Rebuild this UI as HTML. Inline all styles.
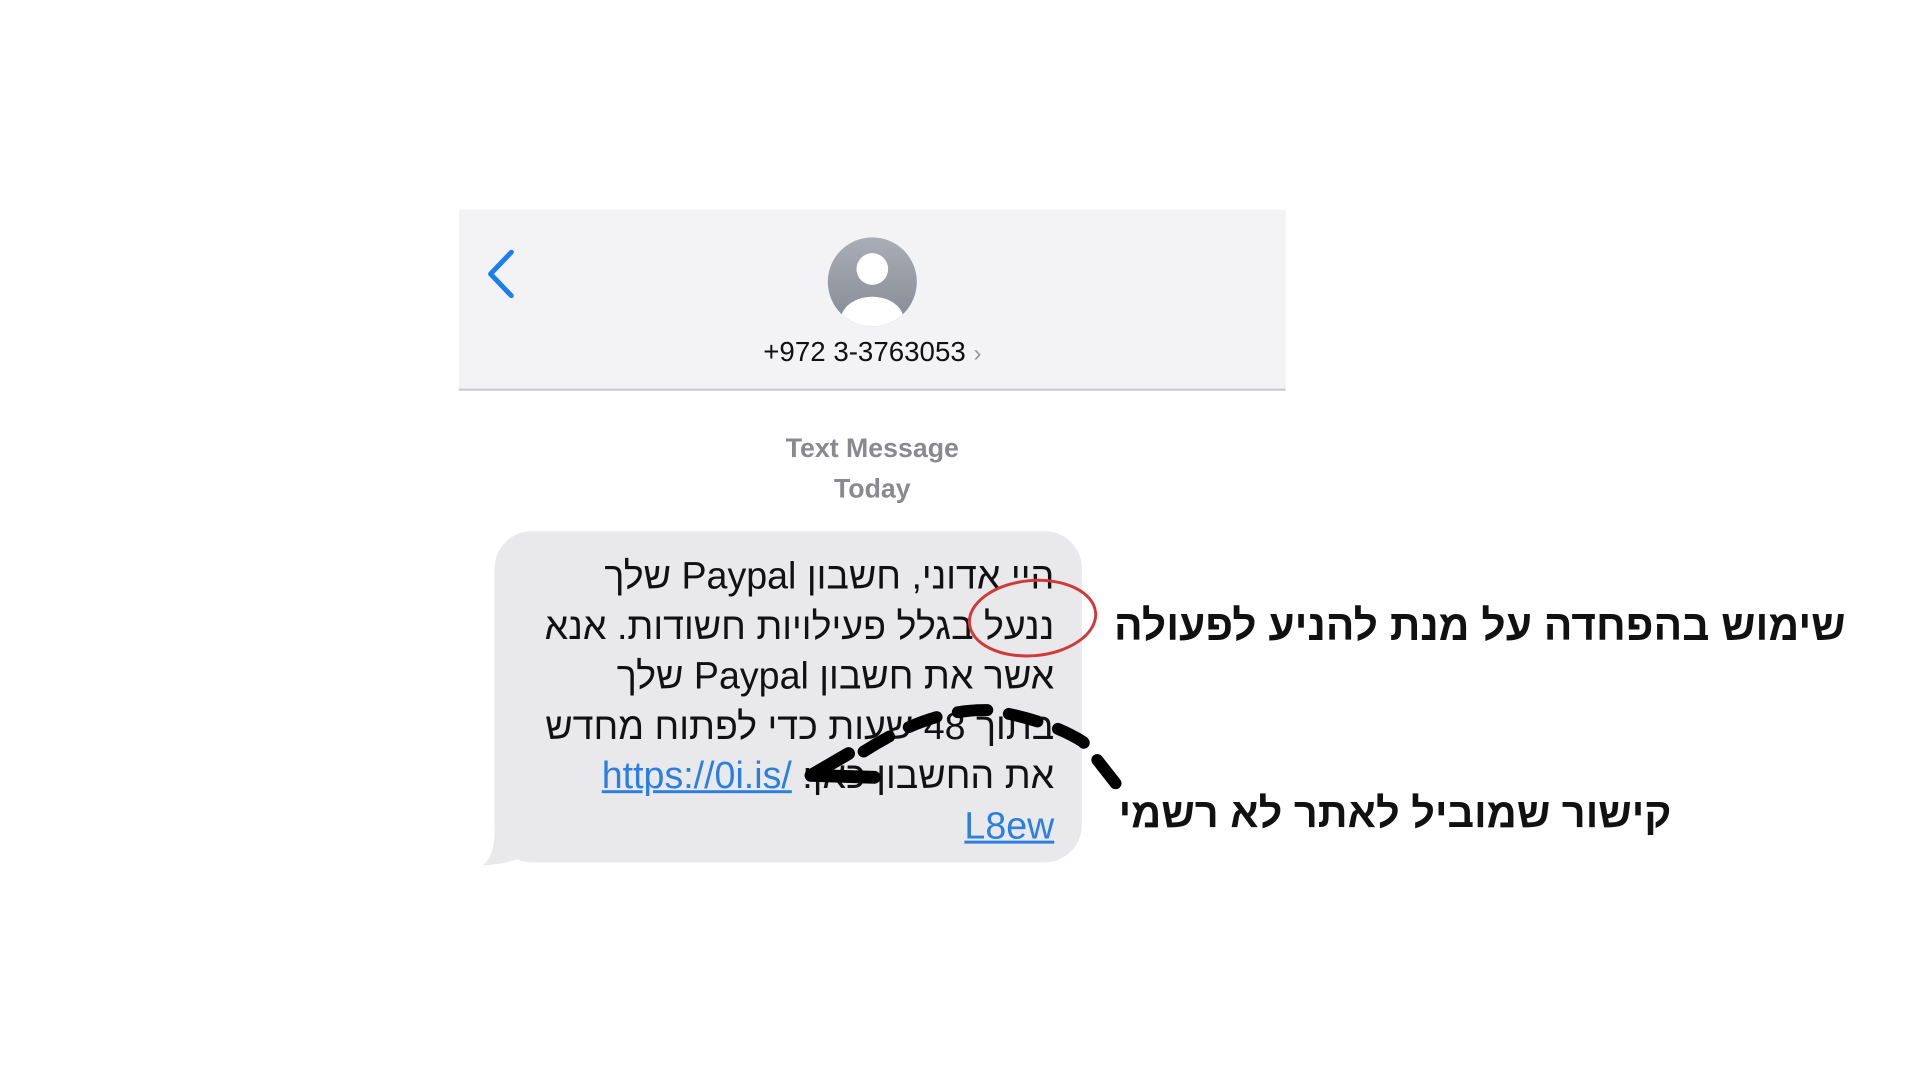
<!DOCTYPE html>
<html><head><meta charset="utf-8"><style>
body{margin:0;width:1920px;height:1080px;background:#fff;position:relative;overflow:hidden;font-family:"Liberation Sans","Noto Sans CJK SC",sans-serif}
#w{position:absolute;left:0;top:0;width:1920px;height:1080px;transform:scale(0.989);transform-origin:0 0}
.hdr{position:absolute;left:464px;top:212px;width:836px;height:181px;background:#f3f3f5;border-bottom:2px solid #c8c8cc}
.ph{position:absolute;left:464px;width:836px;top:340px;text-align:center;font-size:28px;color:#111}
.ph span{color:#999;font-size:24px}
.tm{position:absolute;left:464px;width:836px;text-align:center;font-size:27px;color:#8a8a8e;font-weight:bold}
.bub{position:absolute;left:500px;top:537px;width:594px;height:335px;background:#e9e9eb;border-radius:38px}
.txt{position:absolute;left:510px;width:556px;top:558px;direction:rtl;text-align:right;font-size:38px;line-height:50.5px;color:#111}
.txt a{color:#2b7fe0;text-decoration:underline;direction:ltr;unicode-bidi:isolate}
.ann{position:absolute;direction:rtl;font-weight:bold;font-size:43px;color:#111;white-space:nowrap}
</style></head><body><div id="w">
<div class="hdr"></div>
<svg style="position:absolute;left:0;top:0" width="1920" height="1080">
<polyline points="517,255 496,277 517,299" fill="none" stroke="#1a7ef0" stroke-width="5" stroke-linecap="round" stroke-linejoin="round"/>
<defs><linearGradient id="g" x1="0" y1="0" x2="0" y2="1"><stop offset="0" stop-color="#a9adb6"/><stop offset="1" stop-color="#868a94"/></linearGradient>
<clipPath id="c"><circle cx="882" cy="285" r="45"/></clipPath></defs>
<circle cx="882" cy="285" r="45" fill="url(#g)"/>
<g clip-path="url(#c)" fill="#fff"><circle cx="882" cy="272" r="16"/><ellipse cx="882" cy="324" rx="32" ry="24"/></g>
<path d="M500,840 Q500,866 488,875 Q512,874 530,866 Z" fill="#e9e9eb"/>
</svg>
<div class="ph">+972 3-3763053 <span>›</span></div>
<div class="tm" style="top:438px">Text Message</div>
<div class="tm" style="top:479px">Today</div>
<div class="bub"></div>
<div class="txt">היי אדוני, חשבון Paypal שלך<br>ננעל בגלל פעילויות חשודות. אנא<br>אשר את חשבון Paypal שלך<br>בתוך 48 שעות כדי לפתוח מחדש<br>את החשבון כאן: <a>https://0i.is/</a><br><a>L8ew</a></div>
<svg style="position:absolute;left:0;top:0" width="1920" height="1080">
<ellipse cx="1044" cy="625" rx="64" ry="38" fill="none" stroke="#d03a3a" stroke-width="3" transform="rotate(-5 1044 625)"/>
<path d="M1128,792 L1095,750 Q1060,728 1000,718 Q940,716 870,762" fill="none" stroke="#000" stroke-width="12" stroke-linecap="round" stroke-dasharray="30 22"/>
<path d="M858,762 L820,784 L884,786" fill="none" stroke="#000" stroke-width="13" stroke-linecap="round" stroke-linejoin="round"/>
</svg>
<div class="ann" style="right:54px;top:609px">שימוש בהפחדה על מנת להניע לפעולה</div>
<div class="ann" style="right:230px;top:798px;font-size:42px">קישור שמוביל לאתר לא רשמי</div>
</div></body></html>
